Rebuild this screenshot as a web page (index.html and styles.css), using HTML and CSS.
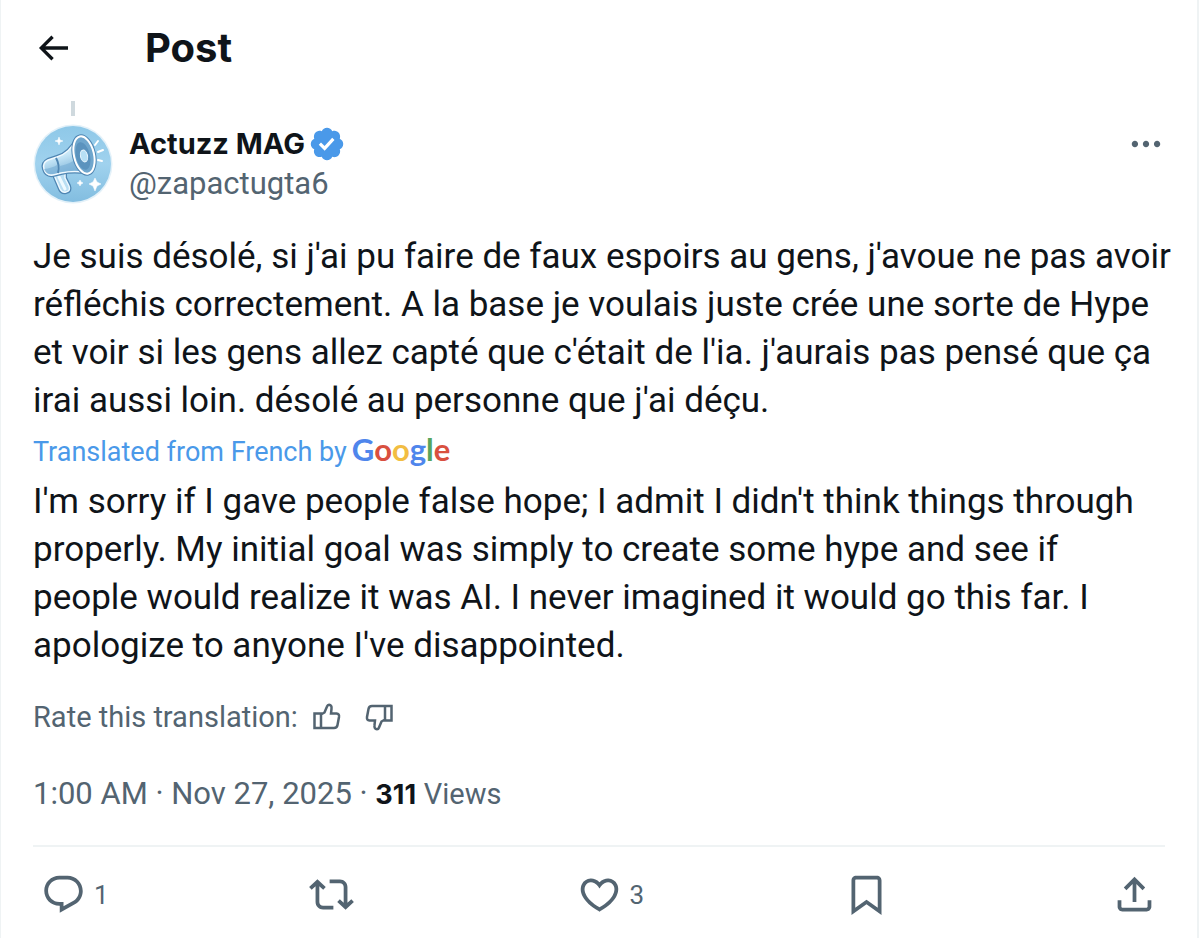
FILE: index.html
```html
<!DOCTYPE html>
<html lang="en">
<head>
    <meta charset="UTF-8">
    <meta name="viewport" content="width=device-width, initial-scale=1.0">
    <title>Post</title>
    <link rel="stylesheet" href="styles.css">
</head>
<body>
    <main class="column">
        <header class="topbar">
            <button class="icon-btn" aria-label="Back">
                <svg class="icon-back" viewBox="0 0 24 24"><path d="M7.414 13l5.043 5.04-1.414 1.42L3.586 12l7.457-7.46 1.414 1.42L7.414 11H21v2H7.414z"/></svg>
            </button>
            <h1>Post</h1>
        </header>

        <article class="post">
            <div class="thread-line"></div>
            <div class="author">
                <svg class="avatar" viewBox="0 0 80 80" role="img" aria-label="Megaphone">
                    <defs>
                        <linearGradient id="sky" x1="0" y1="0" x2="0" y2="1">
                            <stop offset="0" stop-color="#8ec8e8"/>
                            <stop offset="0.5" stop-color="#a0d2ee"/>
                            <stop offset="1" stop-color="#82bde0"/>
                        </linearGradient>
                        <linearGradient id="horn" x1="0" y1="0" x2="0.4" y2="1">
                            <stop offset="0" stop-color="#e6f6fd"/>
                            <stop offset="0.55" stop-color="#c9e8f8"/>
                            <stop offset="1" stop-color="#7db4d9"/>
                        </linearGradient>
                    </defs>
                    <circle cx="40" cy="40" r="39.5" fill="#e3f1f9"/>
                    <circle cx="40" cy="40" r="38" fill="url(#sky)"/>
                    <!-- handle -->
                    <path d="M21 51l8-3 3 2 0 4 4 8q2 5-3 6-4 1-6-3z" fill="#b9def3" stroke="#4f86b3" stroke-width="4" stroke-linejoin="round"/>
                    <path d="M21 51l8-3 3 2 0 4 4 8q2 5-3 6-4 1-6-3z" fill="#b9def3" stroke="#eef9ff" stroke-width="1.5" stroke-linejoin="round"/>
                    <path d="M26 53l6 12" stroke="#effaff" stroke-width="3" stroke-linecap="round"/>
                    <!-- horn -->
                    <path d="M44 14q-7 15-20 19l-9 3q-6 3-4 9 2 7 9 6l8-2q14-3 27 0z" fill="url(#horn)" stroke="#4f86b3" stroke-width="4" stroke-linejoin="round"/>
                    <path d="M44 14q-7 15-20 19l-9 3q-6 3-4 9 2 7 9 6l8-2q14-3 27 0z" fill="url(#horn)" stroke="#f1faff" stroke-width="1.5" stroke-linejoin="round"/>
                    <path d="M11 45q8-1 13-4v8l-5 1q-6 1-8-5zM27 42q12-3 18-8l6 13q-12-2-24 1z" fill="#79afd6" opacity="0.65"/>
                    <path d="M23 34q4 7 2 15" fill="none" stroke="#4f86b3" stroke-width="2"/>
                    <ellipse cx="51" cy="31" rx="10" ry="19" transform="rotate(-13 51 31)" fill="#5b91bc" stroke="#4f86b3" stroke-width="4"/>
                    <ellipse cx="51" cy="31" rx="10" ry="19" transform="rotate(-13 51 31)" fill="#6fa6cd" stroke="#fff" stroke-width="2"/>
                    <ellipse cx="50" cy="32" rx="7" ry="14" transform="rotate(-13 50 32)" fill="#5b93be"/>
                    <ellipse cx="51" cy="32" rx="3.5" ry="6" transform="rotate(-13 51 32)" fill="#b8e0f5" stroke="#ecf8ff" stroke-width="1"/>
                    <!-- sound lines and sparkles -->
                    <path d="M62 21l3-4M65 28l5-2M65 36l4 1" stroke="#fff" stroke-width="2" stroke-linecap="round"/>
                    <path d="M26 13l1 3 3 1-3 1-1 3-1-3-3-1 3-1zM62 54l2 4 4 2-4 2-2 5-2-5-4-2 4-2zM47 56l1 2 2 1-2 1-1 2-1-2-2-1 2-1z" fill="#fff" stroke="#fff" stroke-width="0.5"/>
                </svg>
                <div class="names">
                    <div class="name-row">
                        <a class="name" href="#">Actuzz MAG</a>
                        <svg class="verified" viewBox="0 0 22 22" role="img" aria-label="Verified account"><path d="M20.396 11c-.018-.646-.215-1.275-.57-1.816-.354-.54-.852-.972-1.438-1.246.223-.607.27-1.264.14-1.897-.131-.634-.437-1.218-.882-1.687-.47-.445-1.053-.75-1.687-.882-.633-.13-1.29-.083-1.897.14-.273-.587-.704-1.086-1.245-1.44S11.647 1.62 11 1.604c-.646.017-1.273.213-1.813.568s-.969.854-1.24 1.44c-.608-.223-1.267-.272-1.902-.14-.635.13-1.22.436-1.69.882-.445.47-.749 1.055-.878 1.688-.13.633-.08 1.29.144 1.896-.587.274-1.087.705-1.443 1.245-.356.54-.555 1.17-.574 1.817.02.647.218 1.276.574 1.817.356.54.856.972 1.443 1.245-.224.606-.274 1.263-.144 1.896.13.634.433 1.218.877 1.688.47.443 1.054.747 1.687.878.633.132 1.29.084 1.897-.136.274.586.705 1.084 1.246 1.439.54.354 1.17.551 1.816.569.647-.016 1.276-.213 1.817-.567s.972-.854 1.245-1.44c.604.239 1.266.296 1.903.164.636-.132 1.22-.447 1.68-.907.46-.46.776-1.044.908-1.681s.075-1.299-.165-1.903c.586-.274 1.084-.705 1.439-1.246.354-.54.551-1.17.569-1.816zM9.662 14.85l-3.429-3.428 1.293-1.302 2.072 2.072 4.4-4.794 1.347 1.246z"/></svg>
                    </div>
                    <a class="handle" href="#">@zapactugta6</a>
                </div>
                <button class="icon-btn more" aria-label="More">
                    <svg class="icon-more" viewBox="0 0 24 24"><path d="M3 12c0-1.1.9-2 2-2s2 .9 2 2-.9 2-2 2-2-.9-2-2zm9 2c1.1 0 2-.9 2-2s-.9-2-2-2-2 .9-2 2 .9 2 2 2zm7 0c1.1 0 2-.9 2-2s-.9-2-2-2-2 .9-2 2 .9 2 2 2z"/></svg>
                </button>
            </div>

            <p class="text" lang="fr">Je suis désolé, si j'ai pu faire de faux espoirs au gens, j'avoue ne pas avoir<br>
            réfléchis correctement. A la base je voulais juste crée une sorte de Hype<br>
            et voir si les gens allez capté que c'était de l'ia. j'aurais pas pensé que ça<br>
            irai aussi loin. désolé au personne que j'ai déçu.</p>

            <div class="source">
                <a href="#">Translated from French by</a>
                <a class="google" href="#"><span class="blue">G</span><span class="red">o</span><span class="yellow">o</span><span class="blue">g</span><span class="green">l</span><span class="red">e</span></a>
            </div>

            <p class="text">I'm sorry if I gave people false hope; I admit I didn't think things through<br>
            properly. My initial goal was simply to create some hype and see if<br>
            people would realize it was AI. I never imagined it would go this far. I<br>
            apologize to anyone I've disappointed.</p>

            <div class="rate">
                <span>Rate this translation:</span>
                <button class="icon-btn" aria-label="Good translation">
                    <svg class="icon-thumb" viewBox="0 0 28 28"><path d="M1.5 10.5H8V25H1.5zM8 11.5l3.5-2 2.5-6q.6-1.7 2-1.7 3 .2 2.5 4L18 10.5h5.5q3 .4 2.5 3.5l-1.5 8q-.5 3-3.5 3H8"/></svg>
                </button>
                <button class="icon-btn" aria-label="Bad translation">
                    <svg class="icon-thumb flip" viewBox="0 0 28 28"><path d="M1.5 10.5H8V25H1.5zM8 11.5l3.5-2 2.5-6q.6-1.7 2-1.7 3 .2 2.5 4L18 10.5h5.5q3 .4 2.5 3.5l-1.5 8q-.5 3-3.5 3H8"/></svg>
                </button>
            </div>

            <div class="meta">
                <time datetime="2025-11-27T01:00">1:00 AM · Nov 27, 2025</time> · <b>311</b> <span class="views">Views</span>
            </div>

            <div class="actions">
                <button class="action" aria-label="Reply">
                    <svg viewBox="0 0 24 24"><path d="M1.751 10c0-4.42 3.584-8 8.005-8h4.366c4.49 0 8.129 3.64 8.129 8.13 0 2.96-1.607 5.68-4.196 7.11l-8.054 4.46v-3.69h-.067c-4.49.1-8.183-3.51-8.183-8.01zm8.005-6c-3.317 0-6.005 2.69-6.005 6 0 3.37 2.77 6.08 6.138 6.01l.351-.01h1.761v2.3l5.087-2.81c1.951-1.08 3.163-3.13 3.163-5.36 0-3.39-2.744-6.13-6.129-6.13H9.756z"/></svg>
                    <span>1</span>
                </button>
                <button class="action" aria-label="Repost">
                    <svg viewBox="0 0 24 24"><path d="M4.5 3.88l4.432 4.14-1.364 1.46L5.5 7.55V16c0 1.1.896 2 2 2H13v2H7.5c-2.209 0-4-1.79-4-4V7.55L1.432 9.48.068 8.02 4.5 3.88zM16.5 6H11V4h5.5c2.209 0 4 1.79 4 4v8.45l2.068-1.93 1.364 1.46-4.432 4.14-4.432-4.14 1.364-1.46 2.068 1.93V8c0-1.1-.896-2-2-2z"/></svg>
                </button>
                <button class="action" aria-label="Like">
                    <svg viewBox="0 0 24 24"><path d="M16.697 5.5c-1.222-.06-2.679.51-3.89 2.16l-.805 1.09-.806-1.09C9.984 6.01 8.526 5.44 7.304 5.5c-1.243.07-2.349.78-2.91 1.91-.552 1.12-.633 2.78.479 4.82 1.074 1.97 3.257 4.27 7.129 6.61 3.87-2.34 6.052-4.64 7.126-6.61 1.111-2.04 1.03-3.7.477-4.82-.561-1.13-1.666-1.84-2.908-1.91zm4.187 7.69c-1.351 2.48-4.001 5.12-8.379 7.67l-.503.3-.504-.3c-4.379-2.55-7.029-5.19-8.382-7.67-1.36-2.5-1.41-4.86-.514-6.67.887-1.79 2.647-2.91 4.601-3.01 1.651-.09 3.368.56 4.798 2.01 1.429-1.45 3.146-2.1 4.796-2.01 1.954.1 3.714 1.22 4.601 3.01.896 1.81.846 4.17-.514 6.67z"/></svg>
                    <span>3</span>
                </button>
                <button class="action" aria-label="Bookmark">
                    <svg viewBox="0 0 24 24"><path d="M4 4.5C4 3.12 5.119 2 6.5 2h11C18.881 2 20 3.12 20 4.5v18.44l-8-5.71-8 5.71V4.5zM6.5 4c-.276 0-.5.22-.5.5v14.56l6-4.29 6 4.29V4.5c0-.28-.224-.5-.5-.5h-11z"/></svg>
                </button>
                <button class="action" aria-label="Share">
                    <svg viewBox="0 0 24 24"><path d="M12 2.59l5.7 5.7-1.41 1.42L13 6.41V16h-2V6.41l-3.3 3.3-1.41-1.42L12 2.59zM21 15l-.02 3.51c0 1.38-1.12 2.49-2.5 2.49H5.5C4.11 21 3 19.88 3 18.5V15h2v3.5c0 .28.22.5.5.5h12.98c.28 0 .5-.22.5-.5L19 15h2z"/></svg>
                </button>
            </div>
        </article>
    </main>
</body>
</html>
```

FILE: styles.css
```css
* {
    box-sizing: border-box;
}
body {
    margin: 0;
    background: #fff;
    color: #0f1419;
    font-family: Roboto, Arial, sans-serif;
    font-size: 31px;
}
a {
    color: inherit;
    text-decoration: none;
}
svg {
    display: block;
    fill: currentColor;
}
.column {
    min-height: 100vh;
    margin-right: 1px;
    border-left: 1px solid #eff3f4;
    border-right: 2px solid #eff3f4;
}
.icon-btn, .action {
    margin: 0;
    padding: 0;
    border: 0;
    background: none;
    color: inherit;
    font: inherit;
    cursor: pointer;
}

/* header */
.topbar {
    display: flex;
    align-items: center;
    gap: 72px;
    padding: 24px 32px 29px;
}
.topbar h1 {
    margin: 0;
    font-family: Inter, Arial, sans-serif;
    font-size: 40px;
    line-height: 48px;
}
.icon-back {
    width: 40px;
    height: 40px;
}

/* post */
.post {
    padding: 0 32px;
}
.thread-line {
    width: 4px;
    height: 15px;
    margin-left: 38px;
    background: #cfd9de;
}
.author {
    display: flex;
    align-items: center;
    gap: 16px;
    padding-top: 8px;
}
.avatar {
    width: 80px;
    height: 80px;
}
.names {
    flex: 1;
    line-height: 40px;
}
.name-row {
    display: flex;
    align-items: center;
    gap: 3px;
}
.name {
    font-family: Inter, Arial, sans-serif;
    font-size: 29px;
    font-weight: bold;
}
.verified {
    width: 38px;
    height: 38px;
    color: #4a99e9;
}
.handle, .more, .rate, .meta, .action {
    color: #536471;
}
.more {
    align-self: flex-start;
    padding-top: 1px;
}
.icon-more {
    width: 38px;
    height: 38px;
}
.text {
    margin: 0;
    font-size: 35px;
    line-height: 48px;
    white-space: nowrap;
}
.author + .text {
    margin-top: 29px;
}
.source {
    display: flex;
    align-items: baseline;
    gap: 5px;
    padding-bottom: 1px;
    color: #4a99e9;
    font-size: 27px;
    line-height: 50px;
}
.google {
    font-family: Lato, sans-serif;
    font-size: 31px;
    font-weight: bold;
    line-height: 48px;
}
.blue { color: #4f86ec; }
.red { color: #d9503f; }
.yellow { color: #f2bd42; }
.green { color: #58a55c; }
.rate {
    display: flex;
    align-items: center;
    gap: 24px;
    margin-top: 23px;
    font-size: 29px;
    line-height: 48px;
}
.rate span {
    margin-right: -9px;
}
.icon-thumb {
    width: 28px;
    height: 28px;
    fill: none;
    stroke: currentColor;
    stroke-width: 2.5;
}
.flip {
    transform: rotate(180deg);
}
.meta {
    padding: 33px 0 30px;
    border-bottom: 2px solid #eff3f4;
    line-height: 40px;
}
.meta b {
    color: #0f1419;
    font-family: Inter, Arial, sans-serif;
    font-size: 27px;
}
.views {
    font-size: 29px;
}

/* reply, repost, like, bookmark, share */
.actions {
    display: grid;
    grid-template-columns: repeat(4, 1fr) auto;
    padding: 25px 8px 24px;
}
.action {
    display: flex;
    align-items: center;
    gap: 8px;
    font-size: 26px;
}
.action svg {
    width: 45px;
    height: 45px;
}
```
